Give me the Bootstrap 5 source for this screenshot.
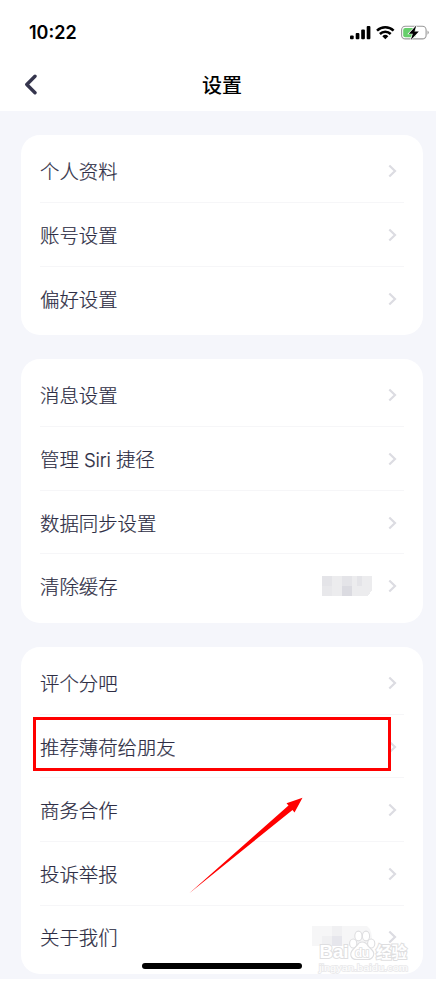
<!DOCTYPE html>
<html lang="zh-CN">
<head>
<meta charset="utf-8">
<meta name="viewport" content="width=device-width, initial-scale=1">
<title>设置</title>
<link href="https://cdn.jsdelivr.net/npm/bootstrap@5.3.0/dist/css/bootstrap.min.css" rel="stylesheet">
<style>
body{font-family:Inter,"Noto Sans CJK SC",sans-serif;background:#fff;color:#2e2e45;height:985px;overflow:hidden}
.status-bar{height:58px;padding:7px 6px 0 29px;color:#000}
.clock{font-size:18px;font-weight:600;line-height:1;padding-top:1px}
.title-bar{height:53px;padding-left:24px}
.page-title{font-family:"Noto Sans CJK SC",sans-serif;font-size:20px;font-weight:500;line-height:1;color:#000;left:202px;top:17px}
.settings{background:#f5f6fb;height:868px;padding:24px 13.3px 0 21px;gap:24px}
.group{background:#fff;border-radius:19px;padding:4.6px 18.5px 4.6px 19px}
.entry{height:63.6px;font-size:19.4px;font-weight:300;line-height:1;border-bottom:1px solid #f6f6f8;padding-right:7px}
.entry:last-child{border-bottom-color:transparent}
.entry-label{padding:4.4px 0 0 0;-webkit-text-stroke:.2px #2e2e45}
.latin{font-size:18.6px;letter-spacing:-.1px}
.entry>svg:last-child{margin-top:1px}
.marker{left:33px;top:717px;width:358px;height:54px;border:3px solid #f00}
.arrow{left:180px;top:790px}
.home-bar{left:142px;top:963px;width:160px;height:6px;border-radius:3px;background:#000}
.mosaic{margin-right:16.5px}
.stamp{left:308px;top:918px}
</style>
</head>
<body class="position-relative">
<header>
  <div class="status-bar d-flex align-items-center justify-content-between">
    <span class="clock">10:22</span>
    <svg width="82" height="18" viewBox="348 24 82 18">
      <g><rect x="350" y="35.5" width="3.7" height="3.7" rx="1"/><rect x="355.7" y="33" width="3.7" height="6.2" rx="1"/><rect x="361.2" y="29.6" width="3.7" height="9.6" rx="1"/><rect x="366.7" y="26" width="3.7" height="13.2" rx="1"/></g>
      <g fill="none" stroke="#000" stroke-width="2.5"><path d="M377 30.700a12 12 0 0 1 16.600 0M379.900 34a7.700 7.700 0 0 1 10.800 0"/></g>
      <path d="M382.300 36.200a4.500 4.500 0 0 1 6 0l-3 3z"/>
      <rect x="401.600" y="26.300" width="24.500" height="12.600" rx="3.700" fill="none" stroke="#999" stroke-width="1.100"/>
      <path d="M427.500 30.400q2.600 2.200 0 4.400z" fill="#999"/>
      <rect x="403.200" y="27.900" width="12.600" height="9.400" rx="2" fill="#66ce6b"/>
      <path d="M416.300 25.500l-7.500 8.200h4l-2 6.300 8-8.500h-4.300z" stroke="#fff" stroke-width="1.300" paint-order="stroke"/>
    </svg>
  </div>
  <div class="title-bar position-relative d-flex align-items-center">
    <svg width="14" height="22" viewBox="0 0 14 22"><path d="M11 2.300L2.800 10.500L11 18.700" fill="none" stroke="#35354d" stroke-width="3.400" stroke-linecap="round" stroke-linejoin="round"/></svg>
    <h1 class="page-title position-absolute m-0">设置</h1>
  </div>
</header>
<svg class="d-none"><symbol id="chev" viewBox="0 0 9 14"><path d="M1.300 1.500L7 7L1.300 12.500" fill="none" stroke="#dcdce2" stroke-width="2.200"/></symbol></svg>
<main class="settings d-flex flex-column">
  <section class="group">
    <div class="entry d-flex align-items-center justify-content-between"><span class="entry-label">个人资料</span><svg width="9" height="14"><use href="#chev"/></svg></div>
    <div class="entry d-flex align-items-center justify-content-between"><span class="entry-label">账号设置</span><svg width="9" height="14"><use href="#chev"/></svg></div>
    <div class="entry d-flex align-items-center justify-content-between"><span class="entry-label">偏好设置</span><svg width="9" height="14"><use href="#chev"/></svg></div>
  </section>
  <section class="group">
    <div class="entry d-flex align-items-center justify-content-between"><span class="entry-label">消息设置</span><svg width="9" height="14"><use href="#chev"/></svg></div>
    <div class="entry d-flex align-items-center justify-content-between"><span class="entry-label">管理<span class="latin"> Siri </span>捷径</span><svg width="9" height="14"><use href="#chev"/></svg></div>
    <div class="entry d-flex align-items-center justify-content-between"><span class="entry-label">数据同步设置</span><svg width="9" height="14"><use href="#chev"/></svg></div>
    <div class="entry d-flex align-items-center"><span class="entry-label me-auto">清除缓存</span>
      <svg class="mosaic" width="50" height="20" shape-rendering="crispEdges"><path fill="#ececee" d="M0 0h50v14l-4 6H0z"/><path fill="#e4e4e8" d="M0 0h10v10H0zM20 0h10v10H20zM35 0h5v10h-5z"/><path fill="#e8e8eb" d="M0 10h10v10H0z"/><path fill="#dbdbe1" d="M20 10h10v10H20z"/></svg>
      <svg width="9" height="14"><use href="#chev"/></svg></div>
  </section>
  <section class="group">
    <div class="entry d-flex align-items-center justify-content-between"><span class="entry-label">评个分吧</span><svg width="9" height="14"><use href="#chev"/></svg></div>
    <div class="entry d-flex align-items-center justify-content-between"><span class="entry-label">推荐薄荷给朋友</span><svg width="9" height="14"><use href="#chev"/></svg></div>
    <div class="entry d-flex align-items-center justify-content-between"><span class="entry-label">商务合作</span><svg width="9" height="14"><use href="#chev"/></svg></div>
    <div class="entry d-flex align-items-center justify-content-between"><span class="entry-label">投诉举报</span><svg width="9" height="14"><use href="#chev"/></svg></div>
    <div class="entry d-flex align-items-center justify-content-between"><span class="entry-label">关于我们</span><svg width="9" height="14"><use href="#chev"/></svg></div>
  </section>
</main>
<div class="marker position-absolute"></div>
<svg class="arrow position-absolute" width="130" height="110" viewBox="180 790 130 110"><path fill="#f00" d="M189 893.500L288.500 805.500L286.500 803.300L302.500 797.700L294.500 812.500L292.500 810z"/></svg>
<svg class="stamp position-absolute" width="110" height="58" viewBox="308 918 110 58">
  <path fill="#f6f6f7" d="M312 926h55q6 4 5 20h-60z"/><path fill="#f0f0f2" d="M332 926h10v10h-10zM322 936h10v10h-10z"/><path fill="#e6e6ec" d="M332 936h10v10h-10z"/>
  <g fill="#fff" stroke="#dedee0" stroke-width="1.100">
    <g font-weight="700" paint-order="stroke" stroke-width="2"><text x="319.500" y="958" font-size="18.500" font-family="Liberation Sans,sans-serif" textLength="29" lengthAdjust="spacingAndGlyphs">Bai</text><text x="376" y="957.500" font-size="15.500" font-family="Noto Sans CJK SC" textLength="31">经验</text></g>
    <ellipse cx="353.200" cy="943.500" rx="3.600" ry="4.500"/><ellipse cx="358.400" cy="936" rx="3.600" ry="4.900"/><ellipse cx="366" cy="936" rx="3.600" ry="4.900"/><ellipse cx="371.200" cy="943.500" rx="3.600" ry="4.500"/>
    <path d="M362 942q4 0 6 4l4 4q3 3 1 6.500t-6 3h-10q-5 0-6-3.500t2-6.500l4-4q2-3.500 5-3.500z"/>
    <text x="355" y="957.300" font-size="12" font-family="Liberation Sans,sans-serif" font-weight="700" textLength="14" paint-order="stroke" stroke-width="1.600">du</text>
  </g>
  <text x="319" y="971.200" font-size="9.800" font-family="Liberation Sans,sans-serif" fill="#fff" stroke="#e8e8ea" stroke-width="1.500" paint-order="stroke" textLength="89" lengthAdjust="spacingAndGlyphs">jingyan.baidu.com</text>
</svg>
<div class="home-bar position-absolute"></div>
<script src="https://cdn.jsdelivr.net/npm/bootstrap@5.3.0/dist/js/bootstrap.bundle.min.js"></script>
</body>
</html>
